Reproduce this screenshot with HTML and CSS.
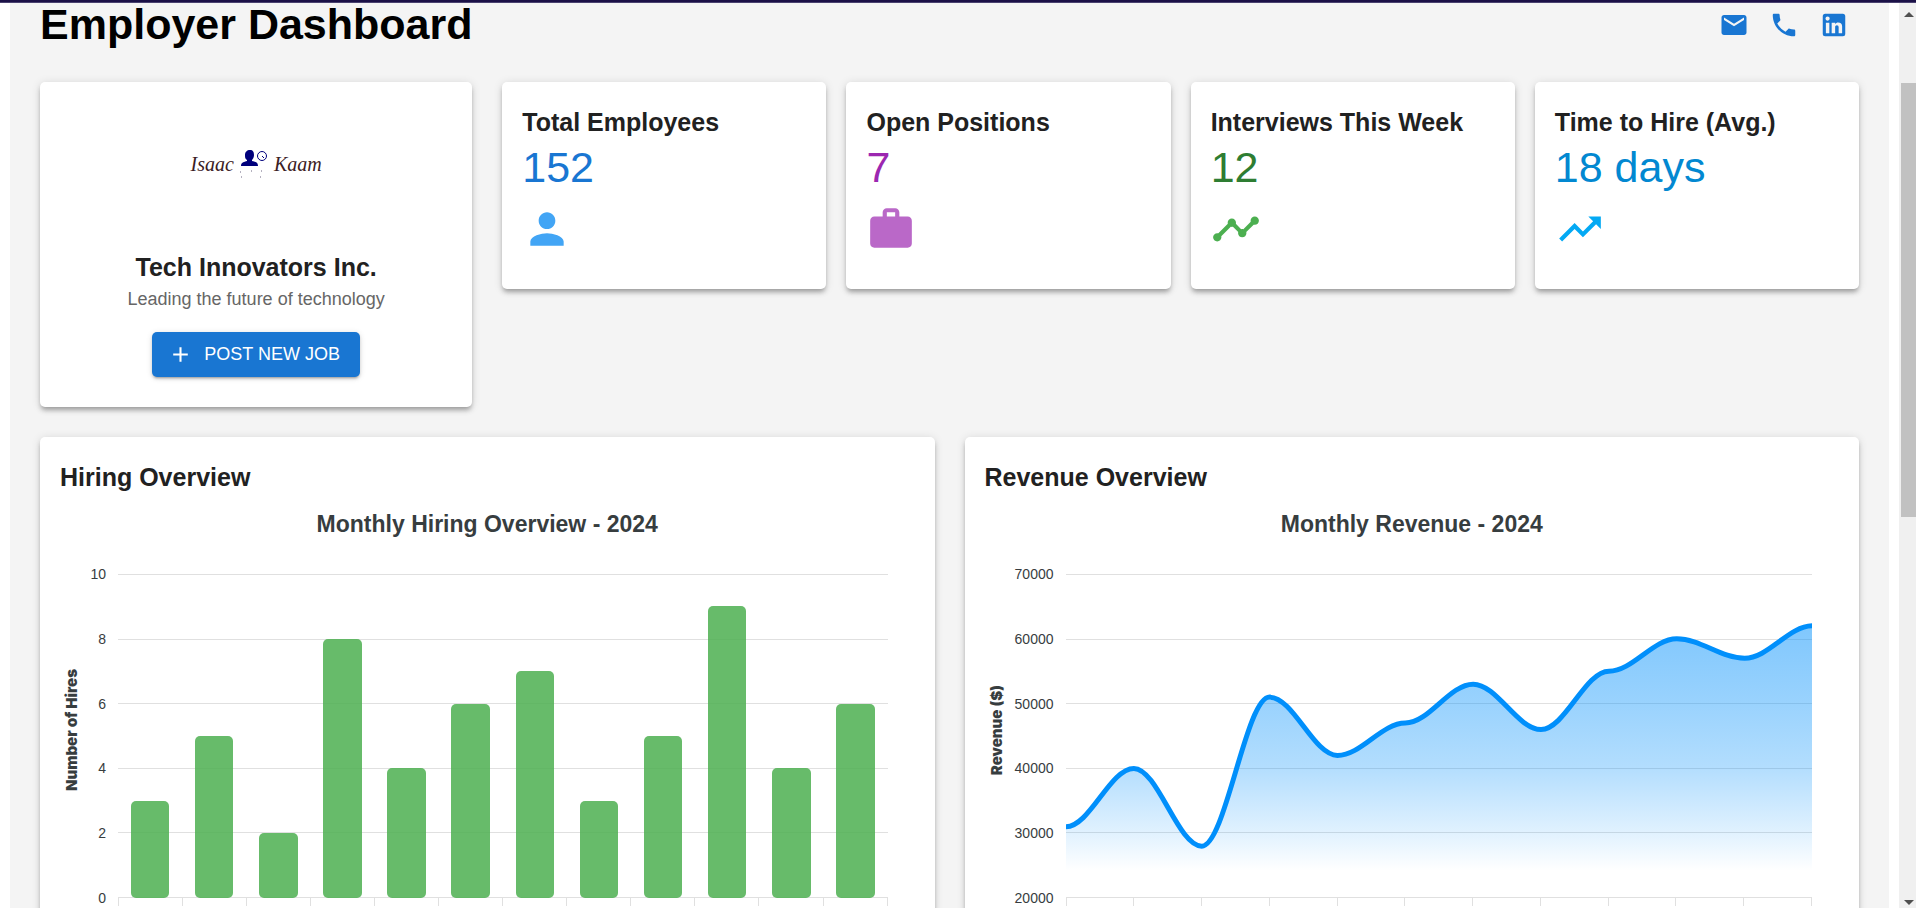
FILE: index.html
```html
<!DOCTYPE html>
<html lang="en">
<head>
<meta charset="utf-8">
<title>Employer Dashboard</title>
<link rel="stylesheet" href="styles.css">
</head>
<body>
<div class="appbar"></div>
<div class="shell">
  <main class="page">
    <header class="header">
      <h1 class="page-title">Employer Dashboard</h1>
      <nav class="contacts">
        <a class="icon-link" href="#mail" aria-label="Email"><svg viewBox="0 0 24 24"><path d="M20 4H4c-1.100 0-1.990.9-1.990 2L2 18c0 1.100.9 2 2 2h16c1.100 0 2-.9 2-2V6c0-1.100-.9-2-2-2m0 4-8 5-8-5V6l8 5 8-5z"/></svg></a>
        <a class="icon-link" href="#phone" aria-label="Phone"><svg viewBox="0 0 24 24"><path d="M6.620 10.790c1.440 2.830 3.760 5.140 6.590 6.590l2.200-2.200c.27-.27.67-.36 1.020-.24 1.120.37 2.330.57 3.570.57.55 0 1 .45 1 1V20c0 .55-.45 1-1 1-9.390 0-17-7.610-17-17 0-.55.45-1 1-1h3.500c.55 0 1 .45 1 1 0 1.250.2 2.450.57 3.570.11.35.03.74-.25 1.020z"/></svg></a>
        <a class="icon-link" href="#linkedin" aria-label="LinkedIn"><svg viewBox="0 0 24 24"><path d="M19 3a2 2 0 0 1 2 2v14a2 2 0 0 1-2 2H5a2 2 0 0 1-2-2V5a2 2 0 0 1 2-2h14m-.5 15.500v-5.300a3.260 3.260 0 0 0-3.260-3.260c-.85 0-1.840.52-2.320 1.300v-1.110h-2.790v8.370h2.790v-4.930c0-.77.62-1.400 1.390-1.400a1.400 1.400 0 0 1 1.400 1.400v4.930h2.790M6.880 8.560a1.680 1.680 0 0 0 1.680-1.680c0-.93-.75-1.690-1.680-1.690a1.690 1.690 0 0 0-1.690 1.690c0 .93.76 1.680 1.690 1.680m1.390 9.940v-8.370H5.500v8.370h2.770z"/></svg></a>
      </nav>
    </header>

    <section class="overview">
      <article class="card company">
        <div class="logo">
          <span class="logo-word">Isaac</span>
          <svg class="logo-mark" viewBox="0 0 28 30">
            <path class="mark-fill" d="M5 5c0-3 2-5 5-5s4 2 4 5c0 2-1 4-2 5v1c3 1 6 1 6 5H1c0-4 3-4 6-5v-1C5 9 5 7 5 5z"/>
            <circle class="mark-line" cx="22" cy="6" r="4.500"/><path class="mark-line" d="M22 6l2 2"/>
            <path class="mark-dots" d="M0 22h1m10-1h1m9 0h1M1 27h1m18 0h1"/>
          </svg>
          <span class="logo-word">Kaam</span>
        </div>
        <h2 class="card-title">Tech Innovators Inc.</h2>
        <p class="tagline">Leading the future of technology</p>
        <button class="post-button" type="button"><svg viewBox="0 0 24 24"><path d="M19 13h-6v6h-2v-6H5v-2h6V5h2v6h6z"/></svg>POST NEW JOB</button>
      </article>

      <div class="stats">
        <article class="card stat">
          <h2 class="card-title">Total Employees</h2>
          <p class="stat-value blue">152</p>
          <svg class="stat-icon blue-light" viewBox="0 0 24 24"><path d="M12 12c2.210 0 4-1.790 4-4s-1.790-4-4-4-4 1.790-4 4 1.790 4 4 4m0 2c-2.670 0-8 1.340-8 4v2h16v-2c0-2.660-5.330-4-8-4"/></svg>
        </article>
        <article class="card stat">
          <h2 class="card-title">Open Positions</h2>
          <p class="stat-value purple">7</p>
          <svg class="stat-icon purple-light" viewBox="0 0 24 24"><path d="M20 6h-4V4c0-1.110-.89-2-2-2h-4c-1.110 0-2 .89-2 2v2H4c-1.110 0-1.990.89-1.990 2L2 19c0 1.110.89 2 2 2h16c1.110 0 2-.89 2-2V8c0-1.110-.89-2-2-2m-6 0h-4V4h4z"/></svg>
        </article>
        <article class="card stat">
          <h2 class="card-title">Interviews This Week</h2>
          <p class="stat-value green">12</p>
          <svg class="stat-icon green-light" viewBox="0 0 24 24"><path d="M23 8c0 1.100-.9 2-2 2-.18 0-.35-.02-.51-.07l-3.560 3.550c.05.16.07.34.07.52 0 1.100-.9 2-2 2s-2-.9-2-2c0-.18.02-.36.07-.52l-2.550-2.550c-.16.05-.34.07-.52.07s-.36-.02-.52-.07l-4.550 4.560c.05.16.07.33.07.51 0 1.100-.9 2-2 2s-2-.9-2-2 .9-2 2-2c.18 0 .35.02.51.07l4.560-4.550C8.020 9.360 8 9.180 8 9c0-1.100.9-2 2-2s2 .9 2 2c0 .18-.02.36-.07.52l2.550 2.550c.16-.05.34-.07.52-.07s.36.02.52.07l3.550-3.560C19.020 8.350 19 8.180 19 8c0-1.100.9-2 2-2s2 .9 2 2"/></svg>
        </article>
        <article class="card stat">
          <h2 class="card-title">Time to Hire (Avg.)</h2>
          <p class="stat-value sky">18 days</p>
          <svg class="stat-icon sky-light" viewBox="0 0 24 24"><path d="m16 6 2.290 2.290-4.880 4.880-4-4L2 16.590 3.410 18l6-6 4 4 6.300-6.290L22 12V6z"/></svg>
        </article>
      </div>
    </section>

    <section class="charts">
      <article class="card chart-card">
        <h2 class="card-title">Hiring Overview</h2>
        <h3 class="chart-title">Monthly Hiring Overview - 2024</h3>
        <div class="chart">
          <div class="axis-title">Number of Hires</div>
          <div class="axis-labels"><span>10</span><span>8</span><span>6</span><span>4</span><span>2</span><span>0</span></div>
          <div class="plot">
            <div class="grid-lines"><i></i><i></i><i></i><i></i><i></i></div>
            <div class="bars">
              <div class="bar" style="height:30%"></div>
              <div class="bar" style="height:50%"></div>
              <div class="bar" style="height:20%"></div>
              <div class="bar" style="height:80%"></div>
              <div class="bar" style="height:40%"></div>
              <div class="bar" style="height:60%"></div>
              <div class="bar" style="height:70%"></div>
              <div class="bar" style="height:30%"></div>
              <div class="bar" style="height:50%"></div>
              <div class="bar" style="height:90%"></div>
              <div class="bar" style="height:40%"></div>
              <div class="bar" style="height:60%"></div>
            </div>
          </div>
          <div class="ticks"><i></i><i></i><i></i><i></i><i></i><i></i><i></i><i></i><i></i><i></i><i></i><i></i></div>
        </div>
      </article>

      <article class="card chart-card">
        <h2 class="card-title">Revenue Overview</h2>
        <h3 class="chart-title">Monthly Revenue - 2024</h3>
        <div class="chart">
          <div class="axis-title">Revenue ($)</div>
          <div class="axis-labels wide"><span>70000</span><span>60000</span><span>50000</span><span>40000</span><span>30000</span><span>20000</span></div>
          <div class="plot">
            <div class="grid-lines"><i></i><i></i><i></i><i></i><i></i></div>
            <svg class="area" viewBox="0 0 1100 500" preserveAspectRatio="none">
              <defs>
                <linearGradient id="fade" x1="0" y1="0" x2="0" y2="1">
                  <stop offset="0" stop-color="#008ffb" stop-opacity="0.5"/>
                  <stop offset="0.28" stop-color="#008ffb" stop-opacity="0.4"/>
                  <stop offset="0.52" stop-color="#008ffb" stop-opacity="0.3"/>
                  <stop offset="0.76" stop-color="#008ffb" stop-opacity="0.12"/>
                  <stop offset="0.9" stop-color="#008ffb" stop-opacity="0"/>
                </linearGradient>
              </defs>
              <path fill="url(#fade)" d="M0 390C35 390 65 300 100 300S165 420 200 420S265 190 300 190S365 280 400 280S465 230 500 230S565 170 600 170S665 240 700 240S765 150 800 150S865 100 900 100S965 130 1000 130S1065 80 1100 80V500H0z"/>
              <path class="area-line" d="M0 390C35 390 65 300 100 300S165 420 200 420S265 190 300 190S365 280 400 280S465 230 500 230S565 170 600 170S665 240 700 240S765 150 800 150S865 100 900 100S965 130 1000 130S1065 80 1100 80"/>
            </svg>
          </div>
          <div class="ticks"><i></i><i></i><i></i><i></i><i></i><i></i><i></i><i></i><i></i><i></i><i></i></div>
        </div>
      </article>
    </section>
  </main>
  <div class="scrollbar">
    <svg class="arrow" viewBox="0 0 10 5"><path d="M0 5l5-5 5 5z"/></svg>
    <div class="thumb"></div>
    <svg class="arrow" viewBox="0 0 10 5"><path d="M0 0l5 5 5-5z"/></svg>
  </div>
</div>
</body>
</html>
```
FILE: styles.css
```css
* { box-sizing: border-box; }
body {
  margin: 0;
  overflow: hidden;
  background: #fff;
  color: #212121;
  font-family: "Liberation Sans", Arial, Helvetica, sans-serif;
}
h1, h2, h3, p { margin: 0; }

.appbar {
  position: fixed;
  inset: 0 0 auto 0;
  z-index: 2;
  height: 3px;
  background: #1b1147;
  border-bottom: 1px solid #4a4270;
}
.shell { display: flex; height: 100vh; overflow: hidden; }
.page {
  flex: 1;
  align-self: flex-start;
  min-width: 0;
  margin: 0 10px;
  padding: 0 30px 30px;
  background: #f4f4f4;
}

.header {
  display: flex;
  align-items: flex-start;
  justify-content: space-between;
  margin-bottom: 32px;
}
.page-title { font-size: 43px; line-height: 48px; color: #000; }
.contacts { display: flex; }
.icon-link { display: block; padding: 10px; height: 50px; }
.icon-link svg { display: block; width: 30px; height: 30px; fill: #1976d2; }

.card {
  background: #fff;
  border-radius: 5px;
  box-shadow: 0 4px 4px -2px rgba(0,0,0,.2), 0 4px 5px rgba(0,0,0,.14), 0 1px 10px rgba(0,0,0,.12);
}
.card-title { font-size: 25px; line-height: 40px; }

.overview {
  display: grid;
  grid-template-columns: repeat(4, 1fr);
  gap: 30px;
  margin-bottom: 30px;
}
.company {
  display: flex;
  flex-direction: column;
  align-items: center;
  padding: 20px 20px 30px;
}
.logo {
  display: flex;
  align-items: center;
  justify-content: center;
  gap: 6px;
  height: 125px;
  margin-bottom: 20px;
}
.logo-word { font: italic 20px "Liberation Serif", serif; color: #3a2024; }
.logo-mark { width: 28px; height: 30px; }
.mark-fill { fill: #00007c; }
.mark-line { fill: none; stroke: #00007c; }
.mark-dots { stroke: #6b6480; }
.tagline { font-size: 18px; line-height: 25px; color: #666; }
.post-button {
  display: flex;
  align-items: center;
  gap: 11px;
  height: 45px;
  margin-top: 20px;
  padding: 0 20px 0 16px;
  border: 0;
  border-radius: 5px;
  background: #1976d2;
  color: #fff;
  font: 18px "Liberation Sans", Arial, sans-serif;
  box-shadow: 0 3px 2px -2px rgba(0,0,0,.2), 0 2px 3px rgba(0,0,0,.14), 0 1px 6px rgba(0,0,0,.12);
}
.post-button svg { width: 25px; height: 25px; fill: #fff; }

.stats {
  grid-column: span 3;
  display: grid;
  grid-template-columns: repeat(4, 1fr);
  align-items: start;
  gap: 20px;
}
.stat { padding: 20px 20px 35px; }
.stat-value { font-size: 43px; line-height: 50px; margin-bottom: 12px; }
.stat-icon { display: block; width: 50px; height: 50px; fill: currentColor; }
.blue { color: #1976d2; }
.blue-light { color: #42a5f5; }
.purple { color: #9c27b0; }
.purple-light { color: #ba68c8; }
.green { color: #2e7d32; }
.green-light { color: #4caf50; }
.sky { color: #0288d1; }
.sky-light { color: #03a9f4; }

.charts { display: grid; grid-template-columns: 1fr 1fr; gap: 30px; }
.chart-card { padding: 20px 20px 60px; }
.chart-title {
  margin: 6px 0 28px;
  font-size: 23px;
  line-height: 43px;
  text-align: center;
  color: #373d3f;
}
.chart {
  display: grid;
  grid-template-columns: 24px auto 1fr;
  padding-right: 27px;
}
.axis-title {
  align-self: center;
  justify-self: center;
  margin-bottom: 12px;
  writing-mode: vertical-rl;
  rotate: 180deg;
  font: 900 15px/24px Inter, "Liberation Sans", sans-serif;
  color: #373d3f;
}
.axis-labels {
  display: flex;
  flex-direction: column;
  justify-content: space-between;
  margin: -10px 12px -10px 0;
  min-width: 22px;
  font-size: 14px;
  line-height: 20px;
  text-align: right;
  color: #373d3f;
}
.axis-labels.wide { min-width: 45px; }
.plot { display: grid; height: 324px; }
.grid-lines, .bars, .area { grid-area: 1 / 1; min-width: 0; }
.grid-lines { display: flex; flex-direction: column; border-bottom: 1px solid #e0e0e0; }
.grid-lines i { flex: 1; border-top: 1px solid #e0e0e0; }
.bars {
  display: grid;
  grid-template-columns: repeat(12, 1fr);
  align-items: end;
  justify-items: center;
  height: 324px;
}
.bar { width: 60%; border-radius: 5px; background: #4caf50; opacity: .85; }
.area { display: block; width: 100%; height: 324px; }
.area-line { fill: none; stroke: #008ffb; stroke-width: 5; vector-effect: non-scaling-stroke; }
.ticks { grid-column: 3; display: flex; height: 8px; border-right: 1px solid #e0e0e0; }
.ticks i { flex: 1; border-left: 1px solid #e0e0e0; }

.scrollbar {
  display: flex;
  flex-direction: column;
  width: 17px;
  padding: 12px 0 3px 2px;
  background: #f0f0f0;
}
.arrow { width: 10px; height: 5px; margin-left: 3px; fill: #505050; }
.thumb { height: 434px; margin: 66px 0 auto; background: #c1c1c1; }
```
